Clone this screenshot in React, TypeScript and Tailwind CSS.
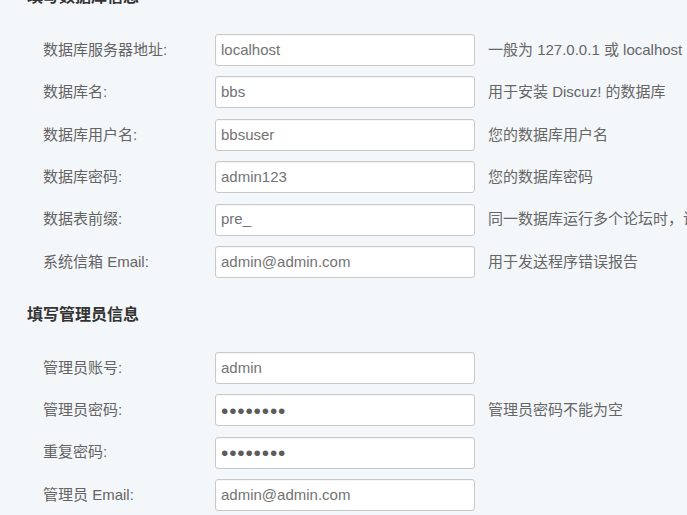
import React from 'react';

const FONT = '"Liberation Sans", "Noto Sans CJK SC", sans-serif';

interface Field {
  label: string;
  value: string;
  hint?: string;
  password?: boolean;
}

const dbFields: Field[] = [
  { label: '数据库服务器地址:', value: 'localhost', hint: '一般为 127.0.0.1 或 localhost' },
  { label: '数据库名:', value: 'bbs', hint: '用于安装 Discuz! 的数据库' },
  { label: '数据库用户名:', value: 'bbsuser', hint: '您的数据库用户名' },
  { label: '数据库密码:', value: 'admin123', hint: '您的数据库密码' },
  { label: '数据表前缀:', value: 'pre_', hint: '同一数据库运行多个论坛时，请修改前缀' },
  { label: '系统信箱 Email:', value: 'admin@admin.com', hint: '用于发送程序错误报告' },
];

const adminFields: Field[] = [
  { label: '管理员账号:', value: 'admin' },
  { label: '管理员密码:', value: '••••••••', hint: '管理员密码不能为空', password: true },
  { label: '重复密码:', value: '••••••••', password: true },
  { label: '管理员 Email:', value: 'admin@admin.com' },
];

function FieldRow({ field }: { field: Field }) {
  return (
    <div className="flex items-center h-8">
      <label className="w-[172px] shrink-0 text-[15px] text-[#646464] whitespace-nowrap">{field.label}</label>
      <div className="w-[260px] h-8 shrink-0 bg-white border border-[#c9c9c9] rounded-[3px] shadow-[inset_0_1px_1px_rgba(0,0,0,0.04)] flex items-center px-[5px] overflow-hidden">
        {field.password ? (
          <span className="text-[21px] leading-none tracking-[0.8px] text-[#5c5c5c]">{field.value}</span>
        ) : (
          <span className="text-[15px] text-[#737373] whitespace-nowrap">{field.value}</span>
        )}
      </div>
      {field.hint && (
        <span className="ml-[13px] text-[15px] text-[#666] whitespace-nowrap">{field.hint}</span>
      )}
    </div>
  );
}

function Section({ title, fields, className }: { title: string; fields: Field[]; className?: string }) {
  return (
    <div className={className}>
      <h3 className="pl-[27px] text-[16px] leading-5 font-bold text-[#333]">{title}</h3>
      <div className="flex flex-col gap-[10.4px] pl-[43px] mt-[27px]">
        {fields.map((f, i) => (
          <FieldRow key={i} field={f} />
        ))}
      </div>
    </div>
  );
}

export default function App() {
  return (
    <div
      className="w-[687px] h-[515px] overflow-hidden bg-[#f4f7fa]"
      style={{ fontFamily: FONT }}
    >
      <Section title="填写数据库信息" fields={dbFields} className="-mt-[13px]" />
      <Section title="填写管理员信息" fields={adminFields} className="mt-[27px]" />
      <div className="pl-[540px] mt-[6px] text-[13px] text-[#aaa] whitespace-nowrap">系统管理员的邮箱地址</div>
    </div>
  );
}
